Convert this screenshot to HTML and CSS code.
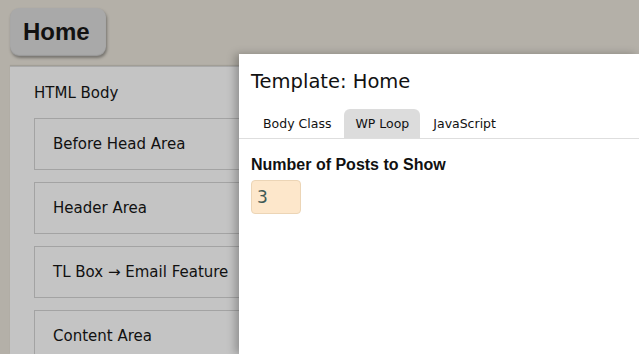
FILE: index.html
```html
<!DOCTYPE html>
<html>
<head>
<meta charset="utf-8">
<link rel="stylesheet" href="styles.css">
</head>
<body>
<div class="page">
  <div class="title-btn">Home</div>
  <div class="layout">
    <div class="layout-label">HTML Body</div>
    <div class="area">Before Head Area</div>
    <div class="area">Header Area</div>
    <div class="area">TL Box → Email Feature</div>
    <div class="area">Content Area</div>
  </div>
  <div class="modal">
    <h2 class="modal-title">Template: Home</h2>
    <div class="tabs">
      <div class="tab">Body Class</div>
      <div class="tab active">WP Loop</div>
      <div class="tab">JavaScript</div>
    </div>
    <div class="tab-body">
      <label class="field-label">Number of Posts to Show</label>
      <div class="num-input">3</div>
    </div>
  </div>
</div>
</body>
</html>
```

FILE: styles.css
```css
html, body {
  margin: 0;
  padding: 0;
  width: 639px;
  height: 354px;
  overflow: hidden;
}
body {
  background: #b4b0a8;
  font-family: "DejaVu Sans", sans-serif;
  color: #111;
}
.page {
  position: relative;
  width: 639px;
  height: 354px;
  padding: 8px 0 0 10px;
  box-sizing: border-box;
  overflow: hidden;
}
.title-btn {
  display: inline-block;
  width: 96px;
  height: 48px;
  box-sizing: border-box;
  padding-left: 13px;
  background: #a9a9a9;
  border-radius: 9px;
  box-shadow: 1px 2px 3px rgba(0,0,0,0.35), inset 0 -1px 1px rgba(0,0,0,0.1);
  font-family: "Liberation Sans", Arial, sans-serif;
  font-weight: bold;
  font-size: 24px;
  line-height: 48px;
  color: #111;
}
.layout {
  margin-top: 10px;
  width: 629px;
  height: 288px;
  overflow: hidden;
  background: #c4c4c4;
  border-top: 1px solid #a9a9a9;
  box-shadow: 0 -1px 1px rgba(0,0,0,0.1);
  padding: 15px 0 0 24px;
  box-sizing: border-box;
}
.layout-label {
  font-size: 15px;
  line-height: 22px;
  margin-bottom: 14px;
}
.area {
  width: 400px;
  height: 52px;
  box-sizing: border-box;
  border: 1px solid #a3a3a3;
  padding-left: 18px;
  font-size: 15px;
  line-height: 50px;
  margin-bottom: 12px;
}
.modal {
  position: absolute;
  left: 239px;
  top: 54px;
  width: 400px;
  height: 300px;
  background: #fff;
  box-shadow: -4px 0 8px rgba(0,0,0,0.25);
}
.modal-title {
  margin: 0;
  padding: 15px 0 0 12px;
  font-weight: normal;
  font-size: 19.5px;
  line-height: 26px;
  color: #111;
}
.tabs {
  display: flex;
  gap: 2px;
  margin-top: 14px;
  padding-left: 13px;
  border-bottom: 1px solid #dedede;
}
.tab {
  padding: 0 11px;
  height: 29px;
  line-height: 29px;
  font-size: 12.5px;
  border-radius: 6px 6px 0 0;
  color: #111;
}
.tab.active {
  background: #dcdcdc;
}
.tab-body {
  padding: 16px 0 0 12px;
}
.field-label {
  display: block;
  font-family: "Liberation Sans", Arial, sans-serif;
  font-weight: bold;
  font-size: 16px;
  line-height: 20px;
  color: #111;
}
.num-input {
  margin-top: 5px;
  width: 50px;
  height: 34px;
  box-sizing: border-box;
  background: #fde7cb;
  border: 1px solid #ecd5b6;
  border-radius: 4px;
  padding-left: 5px;
  font-size: 17px;
  line-height: 32px;
  color: #3f5a55;
}
```
